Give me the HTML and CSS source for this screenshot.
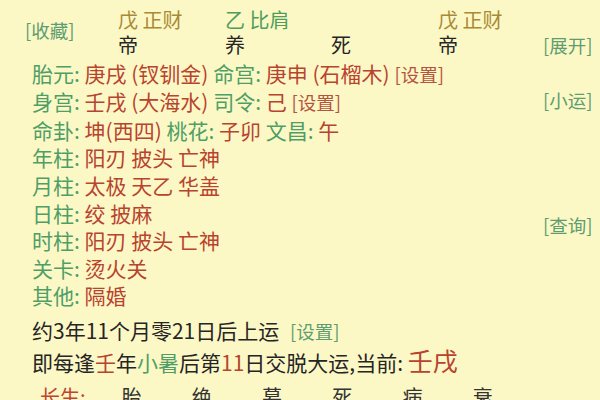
FILE: index.html
```html
<!DOCTYPE html>
<html lang="zh">
<head>
<meta charset="utf-8">
<link rel="stylesheet" href="styles.css">
</head>
<body>
<div class="page">
  <div class="main">
    <div class="header">
      <div class="fav link">[收藏]</div>
      <div class="gold c1">戊 正财</div>
      <div class="green2 c2">乙 比肩</div>
      <div class="c3"></div>
      <div class="gold c4">戊 正财</div>
      <div class="dark c1">帝</div>
      <div class="dark c2">养</div>
      <div class="dark c3">死</div>
      <div class="dark c4">帝</div>
    </div>
    <div class="rows">
      <div class="row"><span class="lab">胎元:</span> <span class="val">庚戌 (钗钏金)</span> <span class="lab">命宫:</span> <span class="val">庚申 (石榴木)</span> <span class="set">[设置]</span></div>
      <div class="row"><span class="lab">身宫:</span> <span class="val">壬戌 (大海水)</span> <span class="lab">司令:</span> <span class="val">己</span> <span class="set">[设置]</span></div>
      <div class="row"><span class="lab">命卦:</span> <span class="val">坤(西四)</span> <span class="lab">桃花:</span> <span class="val">子卯</span> <span class="lab">文昌:</span> <span class="val">午</span></div>
      <div class="row"><span class="lab">年柱:</span> <span class="val">阳刃 披头 亡神</span></div>
      <div class="row"><span class="lab">月柱:</span> <span class="val">太极 天乙 华盖</span></div>
      <div class="row"><span class="lab">日柱:</span> <span class="val">绞 披麻</span></div>
      <div class="row"><span class="lab">时柱:</span> <span class="val">阳刃 披头 亡神</span></div>
      <div class="row"><span class="lab">关卡:</span> <span class="val">烫火关</span></div>
      <div class="row"><span class="lab">其他:</span> <span class="val">隔婚</span></div>
    </div>
    <div class="line l11">约3年11个月零21日后上运 <span class="link small">[设置]</span></div>
    <div class="line l12">即每逢<span class="val">壬</span>年<span class="lab">小暑</span>后第<span class="val">11</span>日交脱大运,当前: <span class="val big">壬戌</span></div>
    <div class="cs">
      <span class="cs-lab">长生:</span>
      <span class="cs-item">胎</span>
      <span class="cs-item">绝</span>
      <span class="cs-item">墓</span>
      <span class="cs-item">死</span>
      <span class="cs-item">病</span>
      <span class="cs-item">衰</span>
    </div>
  </div>
  <div class="side">
    <div class="link s1">[展开]</div>
    <div class="link s2">[小运]</div>
    <div class="link s3">[查询]</div>
  </div>
</div>
</body>
</html>
```
FILE: styles.css
```css
html, body {
  margin: 0;
  padding: 0;
  background: #fcf8c6;
}
body {
  width: 600px;
  height: 400px;
  overflow: hidden;
  font-family: "Noto Sans CJK SC", "Noto Sans", sans-serif;
  color: #2b2b2b;
}
.page {
  display: flex;
  align-items: flex-start;
}
.main {
  width: 543px;
  flex: none;
}
.side {
  width: 57px;
  flex: none;
  display: flex;
  flex-direction: column;
  padding-top: 33px;
}
.link {
  color: #5e9d70;
  font-size: 18.5px;
  line-height: 24px;
  white-space: nowrap;
}
.s2 { margin-top: 31px; }
.s3 { margin-top: 101px; }

.header {
  display: grid;
  grid-template-columns: 93px 107px 106px 107px 100px;
  grid-template-rows: 25px 25px;
  padding-left: 25px;
  padding-top: 7px;
  font-size: 20px;
  line-height: 25px;
  white-space: nowrap;
}
.fav {
  grid-column: 1;
  grid-row: 1 / span 2;
  align-self: center;
  margin-top: -4px;
}
.c1 { grid-column: 2; }
.c2 { grid-column: 3; }
.c3 { grid-column: 4; }
.c4 { grid-column: 5; }
.gold { color: #a88a36; }
.green2 { color: #4f9c5c; }
.dark { color: #262626; }

.rows {
  padding-left: 32px;
  margin-top: 2.6px;
  font-size: 21px;
  line-height: 27.6px;
  white-space: nowrap;
}
.lab { color: #4e9e66; }
.val { color: #b8432f; }
.set {
  color: #b5533f;
  font-size: 18.5px;
}
.line {
  padding-left: 32px;
  font-size: 21px;
  line-height: 30px;
  white-space: nowrap;
  color: #252525;
}
.l11 { margin-top: 5.4px; }
.small { display: inline; font-size: 18.5px; margin-left: 6px; }
.big { font-size: 25px; }
.cs {
  display: flex;
  padding-left: 40px;
  font-size: 20px;
  line-height: 40px;
  white-space: nowrap;
}
.cs-lab {
  width: 94px;
  color: #c0432f;
}
.cs-item {
  width: 81px;
  color: #333;
}
```
